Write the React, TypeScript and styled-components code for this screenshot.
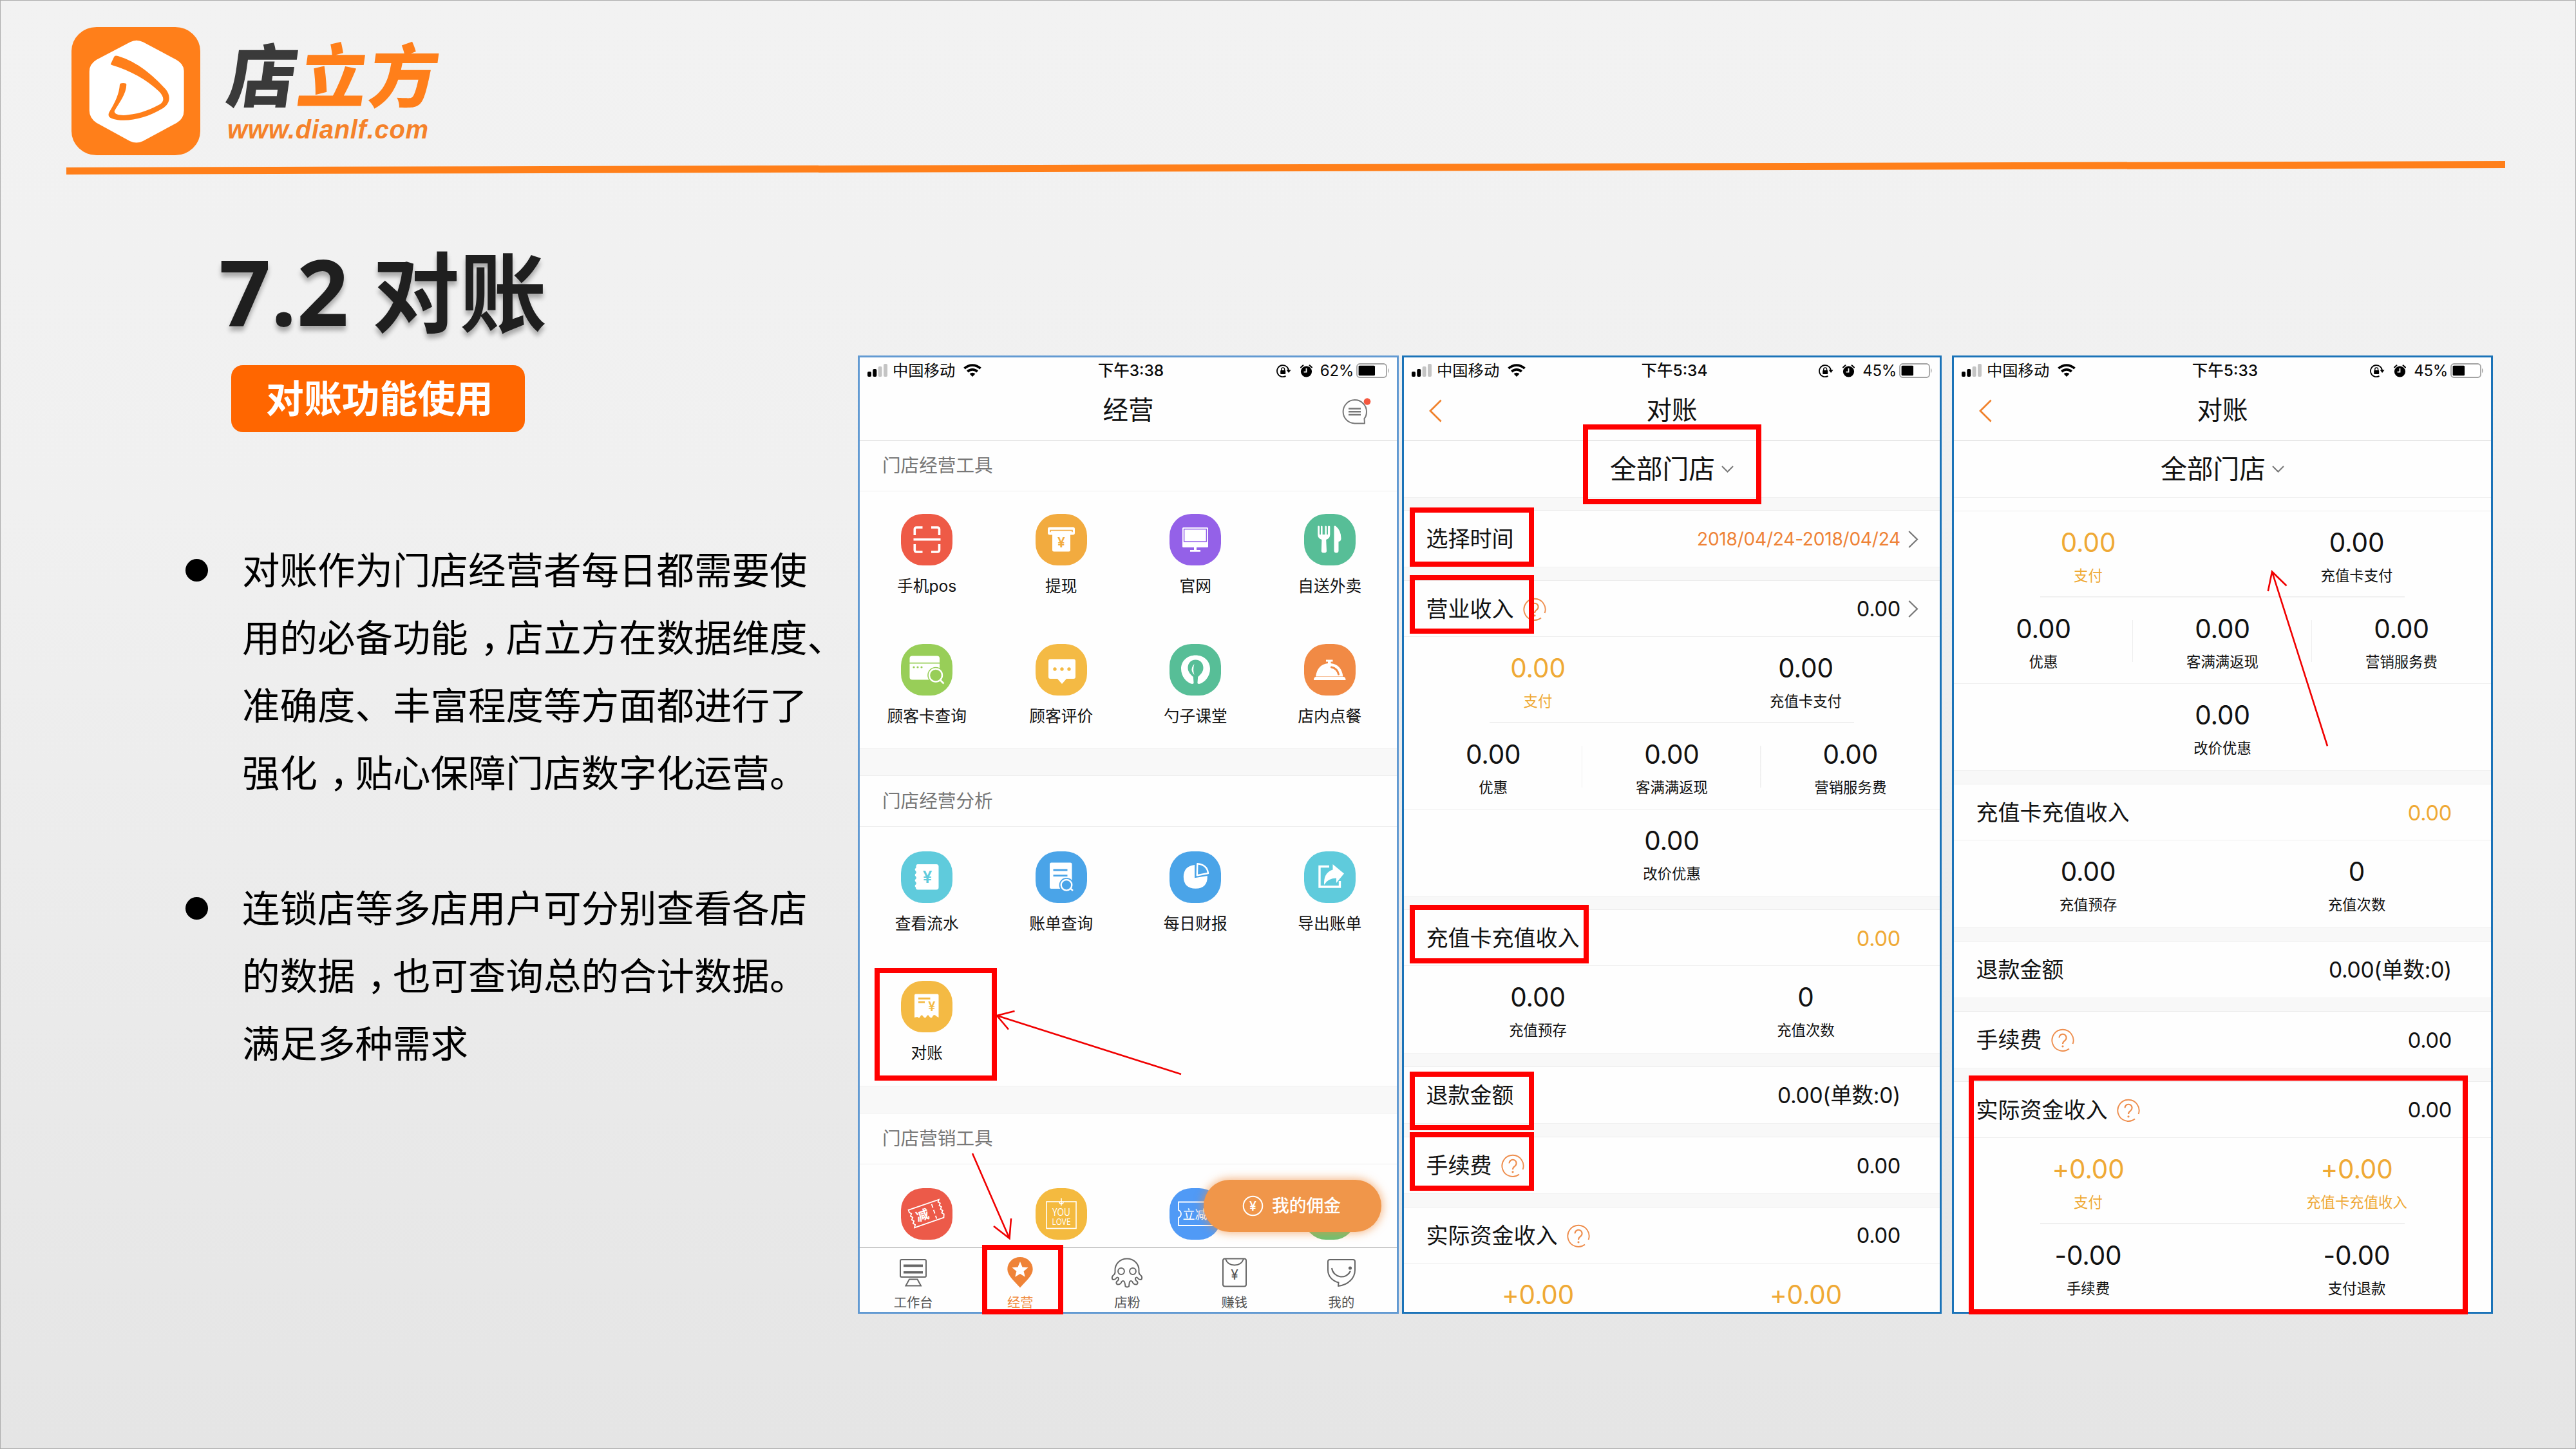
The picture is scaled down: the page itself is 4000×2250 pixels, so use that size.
import React from 'react';
import styled, { createGlobalStyle } from 'styled-components';

const SANS = `Inter, "Noto Sans CJK SC", sans-serif`;

const Global = createGlobalStyle`
  * { box-sizing: border-box; }
  body { margin: 0; font-family: ${SANS}; }
`;

/* ---------- slide frame ---------- */

const Slide = styled.main`
  position: relative;
  width: 4000px;
  height: 2250px;
  overflow: hidden;
  border: 1px solid #ababab;
  background: linear-gradient(180deg, #f2f2f2 0%, #f0f0f0 35%, #e5e5e5 100%);
  display: flex;
  flex-direction: column;
  line-height: 1;
  color: #000;
`;

const Header = styled.header`
  height: 254px;
  flex: none;
  padding: 41px 0 0 110px;
  display: flex;
  align-items: flex-start;
`;

const Brand = styled.div`
  margin-left: 36px;
  padding-top: 13px;
  display: flex;
  flex-direction: column;
`;

const BrandName = styled.div`
  font-family: "Noto Sans CJK SC", sans-serif;
  font-weight: 900;
  font-size: 107px;
  line-height: 114px;
  letter-spacing: 3px;
  white-space: nowrap;
  color: #ff7f1a;
  transform: skewX(-8deg);
  transform-origin: 0 100%;
  span { color: #3a3a3a; }
`;

const BrandUrl = styled.div`
  font-family: "Liberation Sans", sans-serif;
  font-style: italic;
  font-weight: 700;
  font-size: 40px;
  line-height: 40px;
  letter-spacing: 0.7px;
  color: #f5822a;
  margin: 12px 0 0 6px;
  white-space: nowrap;
`;

const Rule = styled.div`
  flex: none;
  margin-left: 102px;
  width: 3787px;
  height: 10.5px;
  background: #ff7f1a;
  transform: rotate(-0.148deg);
`;

const Body = styled.div`
  flex: 1;
  display: flex;
  align-items: flex-start;
`;

/* ---------- left column ---------- */

const Copy = styled.section`
  width: 1331px;
  flex: none;
  padding-top: 115px;
`;

const Title = styled.h1`
  margin: 0 0 0 339px;
  height: 140px;
  line-height: 140px;
  font-family: "Open Sans", "Noto Sans CJK SC", sans-serif;
  font-size: 135.5px;
  font-weight: 700;
  color: #1f1f1f;
  white-space: nowrap;
  text-shadow: 0 7px 7px rgba(0, 0, 0, 0.3);
`;

const TitleNumber = styled.span`
  font-size: 141px;
`;

const Badge = styled.div`
  margin: 46px 0 0 358px;
  width: 456px;
  height: 104px;
  border-radius: 18px;
  background: #ff6600;
  color: #fff;
  font-size: 58.8px;
  font-weight: 700;
  display: flex;
  align-items: center;
  justify-content: center;
  padding: 4px 0 0 5px;
`;

const Points = styled.ul`
  list-style: none;
  margin: 162px 0 0;
  padding: 0 0 0 287px;
  display: flex;
  flex-direction: column;
  gap: 105px;
`;

const Point = styled.li`
  display: flex;
  font-size: 58.5px;
  line-height: 105.1px;
  white-space: nowrap;
  &::before {
    content: "";
    flex: none;
    width: 35px;
    height: 35px;
    margin: 35px 53px 0 0;
    border-radius: 50%;
    background: #000;
  }
`;

const Line = styled.div``;

const Comma = styled.span`
  padding-left: 0.32em;
  margin-right: -0.32em;
`;

/* ---------- phone shell ---------- */

const Phones = styled.section`
  display: flex;
  padding-top: 286px;
`;

const Phone = styled.article<{ $width: number; $border: string; $gap?: number }>`
  width: ${p => p.$width}px;
  height: 1488px;
  margin-right: ${p => p.$gap ?? 0}px;
  border: 3px solid ${p => p.$border};
  background: #fefefe;
  color: #111;
  display: flex;
  flex-direction: column;
  overflow: hidden;
`;

const NavBar = styled.div`
  flex: none;
  height: 129px;
  border-bottom: 1.5px solid #d2d2d2;
`;

const Status = styled.div`
  display: grid;
  grid-template-columns: 1fr auto 1fr;
  align-items: center;
  height: 42px;
  padding: 0 11px 0 12px;
  font-size: 25px;
  color: #0a0a0a;
`;

const StatusSide = styled.div<{ $end?: boolean }>`
  display: flex;
  align-items: center;
  justify-content: ${p => (p.$end ? 'flex-end' : 'flex-start')};
`;

const Carrier = styled.span`
  margin: 0 13px 0 8px;
  font-size: 24.3px;
`;

const Clock = styled.span`
  font-size: 24.5px;
  font-weight: 500;
  padding-left: 7px;
`;

const Percent = styled.span`
  margin: 0 4px 0 12px;
  font-size: 24px;
  letter-spacing: -0.3px;
`;

const Heading = styled.div`
  display: grid;
  grid-template-columns: 80px 1fr 80px;
  align-items: center;
  justify-items: center;
  height: 83px;
  font-size: 39.5px;
`;

/* ---------- tool list screen ---------- */

const SectionTitle = styled.div`
  flex: none;
  height: 79.5px;
  padding: 1px 0 0 35px;
  display: flex;
  align-items: center;
  font-size: 28.6px;
  color: #777;
  border-bottom: 1.5px solid #ededed;
`;

const Band = styled.div<{ $h: number; $plain?: boolean }>`
  flex: none;
  height: ${p => p.$h}px;
  background: ${p => (p.$plain ? '#fefefe' : '#f8f8f8')};
  border-top: 1px solid #f1f1f1;
  border-bottom: 1px solid #ececec;
`;

const Grid = styled.div<{ $pad: number; $h: number }>`
  flex: none;
  height: ${p => p.$h}px;
  padding-top: ${p => p.$pad}px;
  display: grid;
  grid-template-columns: repeat(4, 1fr);
  grid-auto-rows: 201.5px;
  overflow: hidden;
`;

const Tool = styled.div`
  display: flex;
  flex-direction: column;
  align-items: center;
  font-size: 24.7px;
`;

const Tile = styled.div<{ $c: string }>`
  width: 80px;
  height: 80px;
  border-radius: 34px;
  background: ${p => p.$c};
  margin-bottom: 16px;
  overflow: hidden;
  svg { display: block; }
`;

const ToolLabel = styled.span`
  line-height: 33px;
`;

const Deck = styled.div`
  position: relative;
  flex: none;
`;

const Commission = styled.div`
  position: absolute;
  left: 534px;
  top: 24px;
  width: 276px;
  height: 81px;
  border-radius: 40.5px;
  background: #f0964a;
  box-shadow: 0 0 14px 2px rgba(240, 140, 60, 0.6);
  color: #fff;
  font-size: 26.8px;
  font-weight: 500;
  display: flex;
  align-items: center;
  justify-content: center;
  gap: 13px;
  padding-right: 3px;
`;

const TabBar = styled.nav`
  flex: 1;
  border-top: 1.5px solid #ababab;
  padding-right: 3px;
  display: grid;
  grid-template-columns: repeat(5, 1fr);
`;

const Tab = styled.div<{ $on?: boolean }>`
  display: flex;
  flex-direction: column;
  align-items: center;
  padding-top: 14px;
  font-size: 20.3px;
  color: ${p => (p.$on ? '#f08a3c' : '#555')};
  span { margin-top: 11.5px; }
`;

/* ---------- statement screens ---------- */

const StorePicker = styled.div`
  flex: none;
  height: 88px;
  padding-top: 2.5px;
  display: flex;
  align-items: center;
  justify-content: center;
  gap: 10px;
  font-size: 40.8px;
`;

const Row = styled.div<{ $line?: boolean }>`
  flex: none;
  height: 87px;
  padding: 2px 0 0 34.6px;
  display: flex;
  align-items: center;
  font-size: 34px;
  border-bottom: ${p => (p.$line ? '1.5px solid #eee' : 'none')};
`;

const RowLabel = styled.span`
  flex: 1;
  display: flex;
  align-items: center;
  gap: 14px;
`;

const RowValue = styled.span<{ $tone?: string; $size?: number }>`
  font-size: ${p => p.$size ?? 32.6}px;
  letter-spacing: -0.3px;
  color: ${p => p.$tone ?? 'inherit'};
`;

const RowEnd = styled.span`
  width: 61px;
  padding-left: 12px;
  display: flex;
`;

const Figures = styled.div<{ $cols: number; $under?: 'short' | 'full' }>`
  flex: none;
  height: 134.3px;
  display: grid;
  grid-template-columns: repeat(${p => p.$cols}, 1fr);
  border-bottom: ${p => (p.$under === 'full' ? '1.5px solid #efefef' : 'none')};
  background: ${p =>
    p.$under === 'short'
      ? 'linear-gradient(#ececec, #ececec) center bottom / 566px 1.5px no-repeat'
      : 'none'};
`;

const Figure = styled.div<{ $tone?: string; $split?: boolean }>`
  display: flex;
  flex-direction: column;
  align-items: center;
  padding-top: 29px;
  color: ${p => p.$tone ?? 'inherit'};
  background: ${p =>
    p.$split
      ? 'linear-gradient(#efefef, #efefef) right 35px / 1.5px 65px no-repeat'
      : 'none'};
`;

const Amount = styled.span`
  font-size: 40.5px;
  line-height: 40px;
  letter-spacing: -0.2px;
`;

const Caption = styled.span`
  margin-top: 17px;
  font-size: 22.4px;
  line-height: 28px;
`;

/* ---------- annotations ---------- */

const Mark = styled.div<{ $x: number; $y: number; $w: number; $h: number }>`
  position: absolute;
  left: ${p => p.$x - 1}px;
  top: ${p => p.$y - 1}px;
  width: ${p => p.$w}px;
  height: ${p => p.$h}px;
  border: 8.3px solid #ff0000;
`;

const Arrows = styled.svg`
  position: absolute;
  left: -1px;
  top: -1px;
`;

/* ---------- drawings ---------- */

const Logo = () => (
  <svg width="200" height="199" viewBox="28 36 504 597" preserveAspectRatio="none">
    <rect x="28" y="36" width="504" height="597" rx="98" ry="112" fill="#ff7f1a" />
    <path
      d="M258 106Q282 90 308 106L438 188Q468 208 468 240V425Q468 462 440 482L308 567Q282 582 256 567L126 482Q98 460 98 425V243Q98 208 126 188Z"
      fill="#fff"
    />
    <path
      d="M181 209L195 174Q200 167 210 171C290 200 350 265 396 325C420 360 412 395 385 415C330 455 270 474 220 470C180 465 165 455 177 430C200 385 215 345 217 304Q218 297 230 297Q243 297 243 304C243 345 215 390 197 425C190 445 225 450 250 445C300 438 340 418 375 395C393 380 390 360 370 335C320 280 260 240 186 213Z"
      fill="#ff7f1a"
    />
  </svg>
);

const Signal = () => (
  <svg width="31" height="20" viewBox="0 0 31 20">
    <rect x="0" y="12" width="6" height="8" rx="2" fill="#000" />
    <rect x="8.3" y="8" width="6" height="12" rx="2" fill="#000" />
    <rect x="16.6" y="4" width="6" height="16" rx="2" fill="#c4c4c4" />
    <rect x="25" y="0" width="6" height="20" rx="2" fill="#c4c4c4" />
  </svg>
);

const Wifi = () => (
  <svg width="28" height="20" viewBox="0 0 28 20" fill="none" stroke="#000" strokeWidth="3.8">
    <path d="M1.5 7.2A18 18 0 0 1 26.5 7.2" />
    <path d="M6.3 12A11.2 11.2 0 0 1 21.7 12" />
    <path d="M14 20L9.6 15.6A6.4 6.4 0 0 1 18.4 15.6Z" fill="#000" stroke="none" />
  </svg>
);

const RotationLock = () => (
  <svg width="23" height="20" viewBox="0 0 23 20" fill="none" stroke="#000" strokeWidth="1.8">
    <path d="M14.5 17.9A9 9 0 1 1 19 10" />
    <path d="M15.6 8.6H22.6L19.1 13Z" fill="#000" stroke="none" />
    <rect x="6.2" y="9" width="8" height="6" rx="1" fill="#000" stroke="none" />
    <path d="M7.8 9.5V7.3a2.4 2.4 0 0 1 4.8 0V9.5" strokeWidth="1.4" />
  </svg>
);

const AlarmIcon = styled.svg`
  margin-left: 14px;
`;

const Alarm = () => (
  <AlarmIcon width="19" height="20" viewBox="0 0 19 20">
    <circle cx="9.5" cy="11" r="8.6" fill="#000" />
    <path d="M1 4.5L4.5 1.3M18 4.5L14.5 1.3" stroke="#000" strokeWidth="2" strokeLinecap="round" />
    <path d="M9.5 6V11.6H5.6" fill="none" stroke="#fff" strokeWidth="1.8" />
  </AlarmIcon>
);

const Battery = ({ level }: { level: number }) => (
  <svg width="52" height="23" viewBox="0 0 52 23">
    <rect x="1" y="1" width="46" height="21" rx="4.5" fill="#fff" stroke="#a3a3a3" strokeWidth="1.8" />
    <rect x="3.6" y="3.8" width={(41 * level) / 100} height="15.4" rx="1.5" fill="#000" />
    <path d="M49 7.5Q52 11.5 49 15.5Z" fill="#a3a3a3" />
  </svg>
);

const BackIcon = styled.svg`
  margin-left: 18px;
`;

const Chevron = ({ dir }: { dir: 'back' | 'next' | 'down' }) => {
  if (dir === 'back')
    return (
      <BackIcon width="20" height="36" viewBox="0 0 20 36" fill="none" stroke="#f0822d" strokeWidth="2.8">
        <path d="M18.6 1.5L2 18L18.6 34.5" />
      </BackIcon>
    );
  if (dir === 'next')
    return (
      <svg width="16" height="27" viewBox="0 0 16 27" fill="none" stroke="#777" strokeWidth="2.2">
        <path d="M1.2 1L14 13.5L1.2 26" />
      </svg>
    );
  return (
    <svg width="19" height="11" viewBox="0 0 19 11" fill="none" stroke="#777" strokeWidth="2">
      <path d="M1 1L9.5 9.5L18 1" />
    </svg>
  );
};

const MessageIcon = styled.svg`
  margin-right: 44px;
`;

const Message = () => (
  <MessageIcon width="46" height="44" viewBox="0 0 46 44" fill="none" stroke="#777" strokeWidth="2">
    <path d="M35 41.5H20A18.2 18.2 0 1 1 38 23Q38 30 34.5 34Z" strokeLinejoin="round" />
    <path d="M10 18.5H29M10 23.3H29M10 28H29" strokeWidth="2.4" />
    <circle cx="39" cy="7.5" r="5.3" fill="#f4583f" stroke="none" />
  </MessageIcon>
);

const Question = () => (
  <svg width="36" height="36" viewBox="0 0 36 36" fill="none" stroke="#ee8d4c" strokeWidth="1.9">
    <path d="M28 31.6A16.6 16.6 0 1 1 33.6 24" />
    <path d="M12.6 14.4a5.5 5.5 0 1 1 8.6 4.4Q18 20.8 18 24" strokeWidth="2.1" />
    <circle cx="18" cy="27.8" r="1.6" fill="#ee8d4c" stroke="none" />
  </svg>
);

const Yen = ({ x, y, size, fill }: { x: number; y: number; size: number; fill: string }) => (
  <text x={x} y={y} fontSize={size} fontWeight="600" fill={fill} textAnchor="middle" fontFamily="Inter, sans-serif">
    ¥
  </text>
);

const glyphs: Record<string, (c: string) => React.ReactNode> = {
  scan: () => (
    <g fill="none" stroke="#fff" strokeWidth="3.6">
      <path d="M21.3 33V24Q21.3 21 24.3 21H33.5M47 21H56.5Q59.5 21 59.5 24V33M59.5 47V56Q59.5 59 56.5 59H47M33.5 59H24.3Q21.3 59 21.3 56V47" />
      <path d="M19.5 39.8H61.5" />
    </g>
  ),
  atm: c => (
    <g>
      <rect x="19" y="20.5" width="42" height="12" rx="3" fill="#fff" />
      <path d="M23 28.2V25.5H57V28.2" fill="none" stroke={c} strokeWidth="1.6" />
      <path d="M26 27.5H54V56Q54 58.5 51.5 58.5H28.5Q26 58.5 26 56Z" fill="#fff" />
      <Yen x={40} y={52} size={21} fill={c} />
    </g>
  ),
  monitor: c => (
    <g>
      <rect x="20" y="21" width="40" height="31" rx="1.5" fill="#fff" />
      <rect x="22.6" y="23.6" width="34.8" height="19.4" fill="#fff" stroke={c} strokeWidth="1.5" />
      <path d="M38 52H42V56H48V58.8H32V56H38Z" fill="#fff" />
    </g>
  ),
  dining: () => (
    <g fill="#fff">
      <path d="M21.2 19.5Q22.5 17.5 24 19.5V32H26V19.5Q27.3 17.5 28.6 19.5V32H32.4V19.5Q33.7 17.5 35 19.5V32H37V19.5Q38.7 17.5 40.3 19.5V32Q40.3 38 34.2 40L35 58Q34.5 60.5 31 60.5Q27.2 60.5 26.8 58L27.4 40Q21.2 38 21.2 32Z" />
      <path d="M46.5 19.5Q46.8 17.8 49 18.8Q57.5 26 57.5 38Q57.5 42.5 53.5 43V57.5Q53.3 60.5 50 60.5Q46.8 60.5 46.5 57.5Z" />
    </g>
  ),
  cardSearch: c => (
    <g>
      <rect x="13.5" y="18.5" width="46.5" height="37" rx="4" fill="#fff" />
      <path d="M13 29.7H61" stroke={c} strokeWidth="1.8" />
      <g fill={c}>
        <circle cx="20" cy="36" r="1.6" />
        <circle cx="26" cy="36" r="1.6" />
        <circle cx="32" cy="36" r="1.6" />
      </g>
      <circle cx="54" cy="48.5" r="12.8" fill={c} />
      <circle cx="54" cy="48.5" r="10" fill={c} stroke="#fff" strokeWidth="2.4" />
      <path d="M61 56L66.5 61.5" stroke="#fff" strokeWidth="2.6" />
    </g>
  ),
  bubble: c => (
    <g>
      <path d="M23 23.5H59Q62 23.5 62 26.5V51Q62 54 59 54H48L41 62L34 54H23Q20 54 20 51V26.5Q20 23.5 23 23.5Z" fill="#fff" />
      <g fill={c}>
        <circle cx="30" cy="39" r="2.7" />
        <circle cx="41" cy="39" r="2.7" />
        <circle cx="52" cy="39" r="2.7" />
      </g>
    </g>
  ),
  spoon: c => (
    <g>
      <path d="M40.5 17.5C53 17.5 63 26 63 38.5C63 50 55 60 46 62Q42.8 62 42.8 59L43 54H38L38.2 59Q38.2 62 35 62C26 60 18 50 18 38.5C18 26 28 17.5 40.5 17.5Z" fill="#fff" />
      <path d="M40.5 24.5C48 24.5 52.5 30 52.5 37C52.5 43.5 48 47.5 44.2 51L43.2 63H37.8L36.8 51C33 47.5 28.5 43.5 28.5 37C28.5 30 33 24.5 40.5 24.5Z" fill={c} />
      <path d="M38.5 31Q30.5 39.5 38.5 48Q35.8 39.5 38.5 31Z" fill="#fff" />
    </g>
  ),
  cloche: c => (
    <g>
      <path d="M34 24.5H44.5V27.5H41.5V30Q58 32 60.5 50.5H18Q20.5 32 37 30V27.5H34Z" fill="#fff" />
      <path d="M15 56Q15 51.5 18 51H61.5Q64.5 51.5 64.5 56Z" fill="#fff" />
      <path d="M42.5 36Q51.5 38 53.5 47" fill="none" stroke={c} strokeWidth="3" strokeLinecap="round" />
    </g>
  ),
  ledger: c => (
    <g>
      <path d="M26 20H55Q58.5 20 58.5 23.5V56Q58.5 59.5 55 59.5H26Q23 59.5 23 56Q20 53.5 23.5 51Q24.5 49 23 47.5Q20 45 23.5 42.5Q24.5 40.5 23 39Q20 36.5 23.5 34Q24.5 32 23 30.5Q20 28 23.5 25.5Q23 20 26 20Z" fill="#fff" />
      <Yen x={41} y={49} size={26} fill={c} />
    </g>
  ),
  docSearch: c => (
    <g>
      <rect x="22" y="17.5" width="34.5" height="40.5" rx="2.5" fill="#fff" />
      <path d="M27.5 29H49.5M27.5 37.7H49.5" stroke={c} strokeWidth="2.8" />
      <circle cx="48" cy="52.3" r="11.3" fill={c} />
      <circle cx="48" cy="52.3" r="8.3" fill={c} stroke="#fff" strokeWidth="2.4" />
      <path d="M53.5 57L58 61" stroke="#fff" strokeWidth="2.4" />
    </g>
  ),
  pie: () => (
    <g>
      <path d="M39 21V41.2L58.8 38Q59.5 57.5 40.5 57.8Q22 57.5 21.8 39.5Q22 23 39 21Z" fill="#fff" />
      <path d="M43.3 19.2Q58.5 20.5 60 34L42.8 37.3Z" fill="none" stroke="#fff" strokeWidth="2.5" strokeLinejoin="round" />
    </g>
  ),
  exportDoc: () => (
    <g>
      <path d="M39 23.5H24V55H55.5V46" fill="none" stroke="#fff" strokeWidth="3.4" />
      <path d="M44.5 20L62 34.5L50 49V41.5Q37 41.5 31 52Q30 33 44.5 28.5Z" fill="#fff" />
    </g>
  ),
  receipt: c => (
    <g>
      <path d="M23 20.5H56.5Q58.5 20.5 58.5 22.5V57L55 55Q51 50.5 48.5 56.5Q46.5 58.5 44.5 56Q42 50.5 39 56.5Q37 58.5 35 56Q32 50.5 29.5 56.5Q27.5 58.5 25.5 56L21 57V22.5Q21 20.5 23 20.5Z" fill="#fff" />
      <path d="M27 27.5H45.5M27 33.2H37" stroke={c} strokeWidth="2.8" />
      <Yen x={47.8} y={46.5} size={20} fill={c} />
    </g>
  ),
  coupon: () => (
    <g fill="none" stroke="#fff" strokeWidth="1.8" transform="rotate(-19 40 39.5)">
      <path d="M15 25H65L62.5 28L65 31L62.5 34L65 37L62.5 40L65 43L62.5 46L65 49L63 54H15L17.500 50L15 47L17.500 44L15 41L17.500 38L15 35L17.500 32L15 29Z" />
      <path d="M52 28V52" strokeDasharray="6 3.5" />
      <text x="33" y="47" fontSize="20" fill="#fff" stroke="none" fontWeight="700" textAnchor="middle" fontFamily='"Noto Sans CJK SC", sans-serif'>减</text>
    </g>
  ),
  love: () => (
    <g>
      <rect x="17" y="21" width="46" height="41.500" fill="none" stroke="#fff" strokeWidth="1.6" />
      <path d="M40 15.500V27M37 21.500A3 3 0 0 0 43 21.500" stroke="#fff" strokeWidth="1.5" fill="none" />
      <text x="40" y="43" fontSize="16.500" fill="#fff" textAnchor="middle" textLength="28" lengthAdjust="spacingAndGlyphs" fontFamily='"Open Sans", sans-serif'>YOU</text>
      <text x="40" y="56.500" fontSize="14.500" fill="#fff" textAnchor="middle" textLength="29" lengthAdjust="spacingAndGlyphs" fontFamily='"Open Sans", sans-serif'>LOVE</text>
    </g>
  ),
  instant: () => (
    <g>
      <path d="M80 21.500H14V34Q18 36 18 40Q18 44 14 46V58H80" fill="none" stroke="#fff" strokeWidth="1.8" />
      <text x="20.500" y="47.500" fontSize="19" fill="#fff" fontFamily='"Noto Sans CJK SC", sans-serif'>立减</text>
    </g>
  ),
  blank: () => null,
};

type ToolItem = { icon: string; color: string; label?: string };

const ToolGrid = ({ items, pad, h }: { items: ToolItem[]; pad: number; h: number }) => (
  <Grid $pad={pad} $h={h}>
    {items.map(t => (
      <Tool key={t.icon}>
        <Tile $c={t.color}>
          <svg width="80" height="80" viewBox="0 0 80 80">{glyphs[t.icon](t.color)}</svg>
        </Tile>
        {t.label && <ToolLabel>{t.label}</ToolLabel>}
      </Tool>
    ))}
  </Grid>
);

const tabIcons: Record<string, React.ReactNode> = {
  desk: (
    <g fill="none" stroke="#666" strokeWidth="2">
      <rect x="10" y="4" width="40" height="27" rx="2" />
      <path d="M15 13.400H45M15 23.700H45" strokeWidth="3.600" />
      <path d="M24 34.500H36.500L42 44.600H18.500Z" />
    </g>
  ),
  pin: (
    <g>
      <path d="M30 0C41 0 49.700 8 49.700 19C49.700 29 38 38 30 47.500C22 38 10.300 29 10.300 19C10.300 8 19 0 30 0Z" fill="#ef8337" />
      <path d="M30 7L33.500 15.500L42.500 16.200L35.600 22L37.800 30.800L30 26L22.200 30.800L24.400 22L17.500 16.200L26.500 15.500Z" fill="#fff" />
    </g>
  ),
  octopus: (
    <g fill="none" stroke="#666" strokeWidth="2">
      <path d="M30 2.500C41 2.500 49 11 48.500 21Q48 26 51 28Q54.500 31 52.500 34.500Q49 36 46.500 32.500Q44 30.500 43 33Q42.500 36 46 38Q47.500 41 45 42.500Q40 43 38.500 38.500Q36 35.500 34 38.500Q33.500 41 33 45.500Q30 47.500 27.500 45.500Q27 41 26 38.500Q24 35.500 21.500 38.500Q20 43 15 42.500Q12.500 41 14 38Q17.500 36 17 33Q16 30.500 13.500 32.500Q11 36 7.500 34.500Q5.500 31 9 28Q12 26 11.500 21C11 11 19 2.500 30 2.500Z" />
      <circle cx="21" cy="22" r="4.900" />
      <circle cx="39" cy="22" r="4.900" />
    </g>
  ),
  wallet: (
    <g fill="none" stroke="#666" strokeWidth="2">
      <rect x="12" y="2.500" width="36" height="43" rx="3" />
      <path d="M16 3Q19.500 12.500 30 12.500Q40.500 12.500 44 3" />
      <text x="30" y="34.500" fontSize="21" fill="#555" stroke="none" textAnchor="middle" fontFamily="Inter, sans-serif">¥</text>
    </g>
  ),
  cup: (
    <g fill="none" stroke="#666" strokeWidth="2" strokeLinejoin="round">
      <path d="M12 4H48Q51 4 51 7V20C51 33 40 43.500 25 45L25.500 39.500C15 37 9 29 9 20V7Q9 4 12 4Z" />
      <path d="M15 17C17 32 37 36 44 21.500" />
      <circle cx="43.500" cy="17" r="2.600" fill="#666" stroke="none" />
    </g>
  ),
};

const TABS: [string, string][] = [
  ['desk', '工作台'],
  ['pin', '经营'],
  ['octopus', '店粉'],
  ['wallet', '赚钱'],
  ['cup', '我的'],
];

/* ---------- screens ---------- */

const Top = ({ time, battery, title, back }: { time: string; battery: number; title: string; back?: boolean }) => (
  <NavBar>
    <Status>
      <StatusSide>
        <Signal />
        <Carrier>中国移动</Carrier>
        <Wifi />
      </StatusSide>
      <Clock>{time}</Clock>
      <StatusSide $end>
        <RotationLock />
        <Alarm />
        <Percent>{battery}%</Percent>
        <Battery level={battery} />
      </StatusSide>
    </Status>
    <Heading>
      {back ? <Chevron dir="back" /> : <span />}
      <span>{title}</span>
      {back ? <span /> : <Message />}
    </Heading>
  </NavBar>
);

const TOOLS: ToolItem[] = [
  { icon: 'scan', color: '#ee5a46', label: '手机pos' },
  { icon: 'atm', color: '#f2ab3f', label: '提现' },
  { icon: 'monitor', color: '#9461e8', label: '官网' },
  { icon: 'dining', color: '#57be97', label: '自送外卖' },
  { icon: 'cardSearch', color: '#98ce58', label: '顾客卡查询' },
  { icon: 'bubble', color: '#f4ba44', label: '顾客评价' },
  { icon: 'spoon', color: '#57be97', label: '勺子课堂' },
  { icon: 'cloche', color: '#f18a45', label: '店内点餐' },
];

const ANALYSIS: ToolItem[] = [
  { icon: 'ledger', color: '#5fcbdc', label: '查看流水' },
  { icon: 'docSearch', color: '#4aa4e8', label: '账单查询' },
  { icon: 'pie', color: '#4aa4e8', label: '每日财报' },
  { icon: 'exportDoc', color: '#5fcbdc', label: '导出账单' },
  { icon: 'receipt', color: '#f4ba44', label: '对账' },
];

const MARKETING: ToolItem[] = [
  { icon: 'coupon', color: '#ec5a49' },
  { icon: 'love', color: '#f4ba3f' },
  { icon: 'instant', color: '#509af6' },
  { icon: 'blank', color: '#6cc373' },
];

const ManageScreen = () => (
  <Phone $width={840} $border="#629ad2" $gap={5}>
    <Top time="下午3:38" battery={62} title="经营" />
    <SectionTitle>门店经营工具</SectionTitle>
    <ToolGrid items={TOOLS} pad={35} h={399} />
    <Band $h={42.5} />
    <SectionTitle>门店经营分析</SectionTitle>
    <ToolGrid items={ANALYSIS} pad={37.5} h={402} />
    <Band $h={42.5} />
    <SectionTitle>门店营销工具</SectionTitle>
    <Deck>
      <ToolGrid items={MARKETING} pad={36.5} h={128.5} />
      <Commission>
        <svg width="33" height="33" viewBox="0 0 33 33">
          <circle cx="16.500" cy="16.500" r="14.800" fill="none" stroke="#fff" strokeWidth="2" />
          <text x="16.500" y="23.500" fontSize="19.500" fill="#fff" textAnchor="middle" fontFamily="Inter, sans-serif">¥</text>
        </svg>
        <span>我的佣金</span>
      </Commission>
    </Deck>
    <TabBar>
      {TABS.map(([icon, label]) => (
        <Tab key={icon} $on={icon === 'pin'}>
          <svg width="60" height="50" viewBox="0 0 60 50">{tabIcons[icon]}</svg>
          <span>{label}</span>
        </Tab>
      ))}
    </TabBar>
  </Phone>
);

const GOLD = '#efa935';
const ORANGE = '#ee8337';

type Cell = { amount: string; caption?: string; tone?: string };

const FigureRow = ({ cells, under }: { cells: Cell[]; under?: 'short' | 'full' }) => (
  <Figures $cols={cells.length} $under={under}>
    {cells.map(({ amount, caption, tone }, i) => (
      <Figure key={i} $tone={tone} $split={cells.length === 3 && i < 2}>
        <Amount>{amount}</Amount>
        {caption && <Caption>{caption}</Caption>}
      </Figure>
    ))}
  </Figures>
);

const Entry = ({ label, value, tone, size, help, next, line }: {
  label: string; value?: string; tone?: string; size?: number; help?: boolean; next?: boolean; line?: boolean;
}) => (
  <Row $line={line}>
    <RowLabel>
      {label}
      {help && <Question />}
    </RowLabel>
    <RowValue $tone={tone} $size={size}>{value}</RowValue>
    <RowEnd>{next && <Chevron dir="next" />}</RowEnd>
  </Row>
);

const Income = () => (
  <>
    <FigureRow under="short" cells={[{ amount: '0.00', caption: '支付', tone: GOLD }, { amount: '0.00', caption: '充值卡支付' }]} />
    <FigureRow
      under="full"
      cells={[
        { amount: '0.00', caption: '优惠' },
        { amount: '0.00', caption: '客满满返现' },
        { amount: '0.00', caption: '营销服务费' },
      ]}
    />
    <FigureRow cells={[{ amount: '0.00', caption: '改价优惠' }]} />
    <Band $h={22} />
    <Entry label="充值卡充值收入" value="0.00" tone={GOLD} line />
    <FigureRow cells={[{ amount: '0.00', caption: '充值预存' }, { amount: '0', caption: '充值次数' }]} />
    <Band $h={22} />
    <Entry label="退款金额" value="0.00(单数:0)" size={33.6} />
    <Band $h={22} />
    <Entry label="手续费" value="0.00" help />
    <Band $h={22} />
    <Entry label="实际资金收入" value="0.00" help line />
  </>
);

const StatementTop = () => (
  <Phone $width={838} $border="#1b73b8" $gap={16}>
    <Top time="下午5:34" battery={45} title="对账" back />
    <StorePicker>全部门店<Chevron dir="down" /></StorePicker>
    <Band $h={21} />
    <Entry label="选择时间" value="2018/04/24-2018/04/24" tone={ORANGE} size={28.2} next />
    <Band $h={22} />
    <Entry label="营业收入" value="0.00" help next line />
    <Income />
    <FigureRow cells={[{ amount: '+0.00', tone: GOLD }, { amount: '+0.00', tone: GOLD }]} />
  </Phone>
);

const StatementBottom = () => (
  <Phone $width={840} $border="#1b73b8">
    <Top time="下午5:33" battery={45} title="对账" back />
    <StorePicker>全部门店<Chevron dir="down" /></StorePicker>
    <Band $h={22} $plain />
    <Income />
    <FigureRow
      under="short"
      cells={[
        { amount: '+0.00', caption: '支付', tone: GOLD },
        { amount: '+0.00', caption: '充值卡充值收入', tone: GOLD },
      ]}
    />
    <FigureRow cells={[{ amount: '-0.00', caption: '手续费' }, { amount: '-0.00', caption: '支付退款' }]} />
  </Phone>
);

const MARKS: [number, number, number, number][] = [
  [1358, 1503, 190, 175],
  [1525, 1933, 126, 108],
  [2458, 659, 277, 123.5],
  [2189, 788, 192.5, 91.5],
  [2189, 893, 192.5, 91],
  [2189, 1405, 278, 91],
  [2189, 1664, 192.5, 91],
  [2189, 1758, 192.5, 91],
  [3056.5, 1670, 775.5, 371],
];

export default function App() {
  return (
    <>
      <Global />
      <Slide>
        <Header>
          <Logo />
          <Brand>
            <BrandName><span>店</span>立方</BrandName>
            <BrandUrl>www.dianlf.com</BrandUrl>
          </Brand>
        </Header>
        <Rule />
        <Body>
          <Copy>
            <Title><TitleNumber>7.2 </TitleNumber>对账</Title>
            <Badge>对账功能使用</Badge>
            <Points>
              <Point>
                <div>
                  <Line>对账作为门店经营者每日都需要使</Line>
                  <Line>用的必备功能<Comma>，</Comma>店立方在数据维度、</Line>
                  <Line>准确度、丰富程度等方面都进行了</Line>
                  <Line>强化<Comma>，</Comma>贴心保障门店数字化运营。</Line>
                </div>
              </Point>
              <Point>
                <div>
                  <Line>连锁店等多店用户可分别查看各店</Line>
                  <Line>的数据<Comma>，</Comma>也可查询总的合计数据。</Line>
                  <Line>满足多种需求</Line>
                </div>
              </Point>
            </Points>
          </Copy>
          <Phones>
            <ManageScreen />
            <StatementTop />
            <StatementBottom />
          </Phones>
        </Body>
        {MARKS.map(([x, y, w, h]) => (
          <Mark key={`${x}-${y}`} $x={x} $y={y} $w={w} $h={h} />
        ))}
        <Arrows width="4000" height="2250" viewBox="0 0 4000 2250" fill="none" stroke="#f00000" strokeWidth="2.600">
          <path d="M1834 1668L1548 1577M1575.500 1570L1548 1577L1566 1598.500" />
          <path d="M1510 1791L1567.500 1923M1543 1904L1567.500 1923L1570 1892" />
          <path d="M3614 1158.500L3528 887.700M3521.800 918L3528 887.700L3550.500 909.500" />
        </Arrows>
      </Slide>
    </>
  );
}
